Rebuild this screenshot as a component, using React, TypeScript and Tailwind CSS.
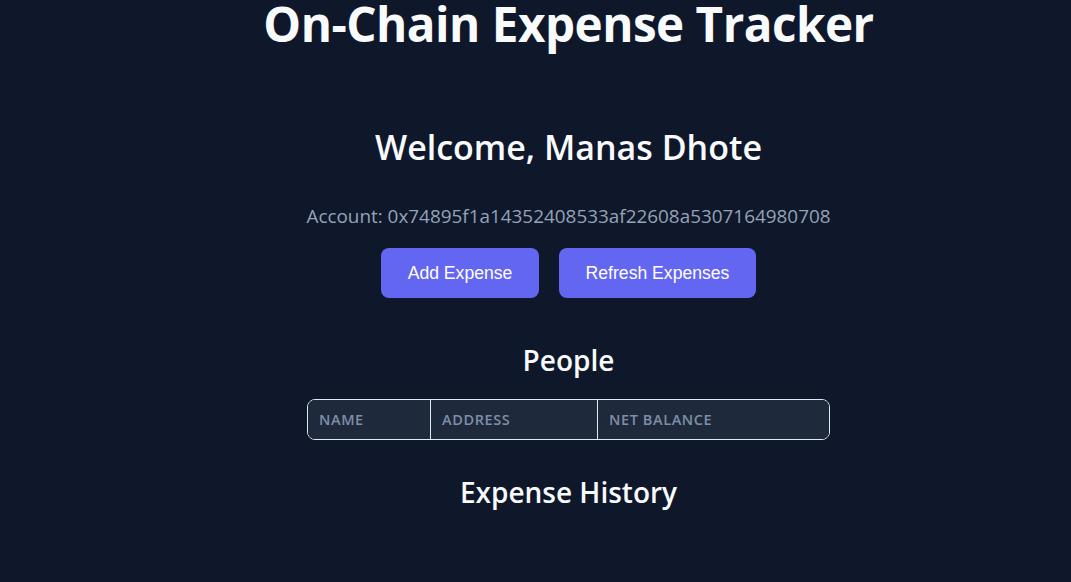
const FONT = "font-['Open_Sans','Noto_Sans',sans-serif]"

const COLUMNS = [
  { label: 'Name', width: 'w-[123px]' },
  { label: 'Address', width: 'w-[167px]' },
  { label: 'Net Balance', width: '' },
]

export default function App() {
  return (
    <div className={`min-h-[582px] w-full bg-[#0f172a] text-[#f8fafc] ${FONT}`}>
      <div className="flex flex-col items-center pl-[66px]">
        <h1 className="text-[47.6px] font-bold leading-[48px] tracking-[-0.5px]">
          On-Chain Expense Tracker
        </h1>

        <h2 className="mt-[77px] text-[34px] font-semibold leading-[44px]">Welcome, Manas Dhote</h2>

        <p className="mt-[34px] text-[18.9px] leading-[26px] text-[#94a3b8]">
          Account: 0x74895f1a14352408533af22608a5307164980708
        </p>

        <div className="mt-[19px] flex gap-5 font-['Liberation_Sans',Arial,sans-serif]">
          <button className="h-[50px] w-[158px] rounded-lg bg-[#6366f1] text-[17.6px] text-white">
            Add Expense
          </button>
          <button className="h-[50px] w-[197px] rounded-lg bg-[#6366f1] text-[17.6px] text-white">
            Refresh Expenses
          </button>
        </div>

        <h3 className="mt-[44px] text-[28px] font-semibold leading-[36px]">People</h3>

        <div className="mt-[21px] w-[523px] overflow-hidden rounded-lg border border-[#e2e8f0]">
          <div className="flex h-[39px] bg-[#1e293b]">
            {COLUMNS.map((c, i) => (
              <div
                key={c.label}
                className={`flex items-center px-[11px] text-[14.5px] font-semibold uppercase tracking-[0.6px] text-[#7f8ea6] ${c.width} ${
                  i < COLUMNS.length - 1 ? 'border-r border-[#e2e8f0]' : 'flex-1'
                }`}
              >
                {c.label}
              </div>
            ))}
          </div>
        </div>

        <h3 className="mt-[34px] text-[28px] font-semibold leading-[36px]">Expense History</h3>
      </div>
    </div>
  )
}
